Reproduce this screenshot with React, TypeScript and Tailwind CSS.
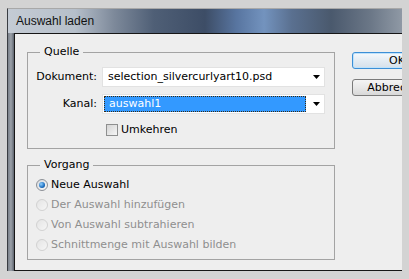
const RADIOS = [
  { label: 'Neue Auswahl', checked: true, disabled: false },
  { label: 'Der Auswahl hinzufügen', checked: false, disabled: true },
  { label: 'Von Auswahl subtrahieren', checked: false, disabled: true },
  { label: 'Schnittmenge mit Auswahl bilden', checked: false, disabled: true },
];

function Arrow() {
  return (
    <svg width="7" height="4" viewBox="0 0 7 4" className="flex-shrink-0">
      <polygon points="0,0 7,0 3.5,4" fill="#000" />
    </svg>
  );
}

function Radio({ checked, disabled }: { checked: boolean; disabled: boolean }) {
  if (disabled) {
    return (
      <span className="w-[12px] h-[12px] rounded-full border border-[#d2d2d2] bg-[linear-gradient(135deg,#e4e4e4,#f6f6f6)] flex-shrink-0" />
    );
  }
  return (
    <span className="w-[12px] h-[12px] rounded-full border border-[#8c9096] bg-[linear-gradient(135deg,#d8dbe0,#f8f8f8)] flex items-center justify-center flex-shrink-0">
      {checked && (
        <span className="w-[6px] h-[6px] rounded-full bg-[radial-gradient(circle_at_35%_35%,#8fd0ff,#1d6fc0_60%,#0c3f7a)]" />
      )}
    </span>
  );
}

export default function App() {
  return (
    <div
      className="w-[409px] h-[279px] bg-[#d3d3d3] pl-[7px] pt-[8px] pr-[7px] pb-[8px] overflow-hidden"
      style={{ fontFamily: '"DejaVu Sans", Verdana, sans-serif' }}
    >
      <div className="h-full flex flex-col border-l border-[#3a3d42] border-t border-t-[#a8a8a8]">
        {/* title bar */}
        <div className="h-[24px] flex-shrink-0 flex items-center pl-[8px] bg-[linear-gradient(90deg,#c4cbd4_0%,#b6bfca_17%,#7d899a_27%,#4f5f76_37%,#3d4d66_50%,#5875a0_58%,#7393be_65%,#5a7090_72%,#4a596d_82%,#6b7787_92%,#8f99a5_100%)]">
          <span className="text-[12px] text-[#111]" style={{ fontFamily: '"Liberation Sans", Arial, sans-serif' }}>
            Auswahl laden
          </span>
        </div>

        <div className="flex-1 flex min-h-0">
          {/* left glass edge */}
          <div className="w-[6px] flex-shrink-0 bg-[linear-gradient(90deg,#7c838c,#9aa0a8_50%,#5d646e)]" />

          {/* dialog body */}
          <div className="flex-1 flex items-start bg-[#eeeeee] border-l border-t border-b border-[#161616] overflow-hidden text-[11px] leading-[14px]">
            <div className="ml-[12px] mt-[11px] w-[308px] flex-shrink-0">
              <fieldset className="border border-[#a3a3a3] pl-[8px] pr-[9px] pt-[8px] pb-[11px]">
                <legend className="ml-[4px] px-[4px] text-black">Quelle</legend>
                <div className="grid grid-cols-[61px_1fr] gap-x-[5px] gap-y-[7px] items-center">
                  <span className="text-right text-black">Dokument:</span>
                  <div className="h-[20px] bg-white border border-[#e2e2e2] flex items-center pl-[5px] pr-[4px]">
                    <span className="flex-1 text-black whitespace-nowrap">selection_silvercurlyart10.psd</span>
                    <Arrow />
                  </div>
                  <span className="text-right text-black">Kanal:</span>
                  <div className="h-[20px] bg-white border border-[#e2e2e2] flex items-center pl-[1px] pr-[4px]">
                    <span className="w-[202px] h-[16px] bg-[#3399ff] border border-dotted border-[#3b2a10] text-white pl-[4px] leading-[14px]">
                      auswahl1
                    </span>
                    <span className="flex-1" />
                    <Arrow />
                  </div>
                  <span />
                  <label className="flex items-center gap-[3px] pl-[4px] mt-[2px]">
                    <span className="w-[12px] h-[12px] border border-[#8e8f8f] bg-[linear-gradient(135deg,#d4d4d4,#f6f6f6)] flex-shrink-0" />
                    <span className="text-black">Umkehren</span>
                  </label>
                </div>
              </fieldset>

              <fieldset className="mt-[9px] border border-[#a3a3a3] pl-[8px] pt-[3px] pb-[4px]">
                <legend className="ml-[4px] px-[4px] text-black">Vorgang</legend>
                {RADIOS.map(r => (
                  <div key={r.label} className="h-[20px] flex items-center gap-[3px]">
                    <Radio checked={r.checked} disabled={r.disabled} />
                    <span className={r.disabled ? 'text-[#8e8e8e] whitespace-nowrap' : 'text-black whitespace-nowrap'}>
                      {r.label}
                    </span>
                  </div>
                ))}
              </fieldset>
            </div>

            <div className="ml-[17px] mt-[18px] flex flex-col gap-[10px] flex-shrink-0">
              <button className="w-[90px] h-[17px] rounded-[3px] border border-[#3c8fd6] bg-[linear-gradient(180deg,#f6f9fc,#e4ecf3_50%,#d6e0ea)] text-black text-[11px] leading-[14px] shadow-[inset_0_0_0_1px_#bfe2fb]">
                OK
              </button>
              <button className="w-[90px] h-[17px] rounded-[3px] border border-[#7a7a7a] bg-[linear-gradient(180deg,#f4f4f4,#e8e8e8_50%,#d8d8d8)] text-black text-[11px] leading-[14px]">
                Abbrechen
              </button>
            </div>
          </div>
        </div>
      </div>
    </div>
  );
}
